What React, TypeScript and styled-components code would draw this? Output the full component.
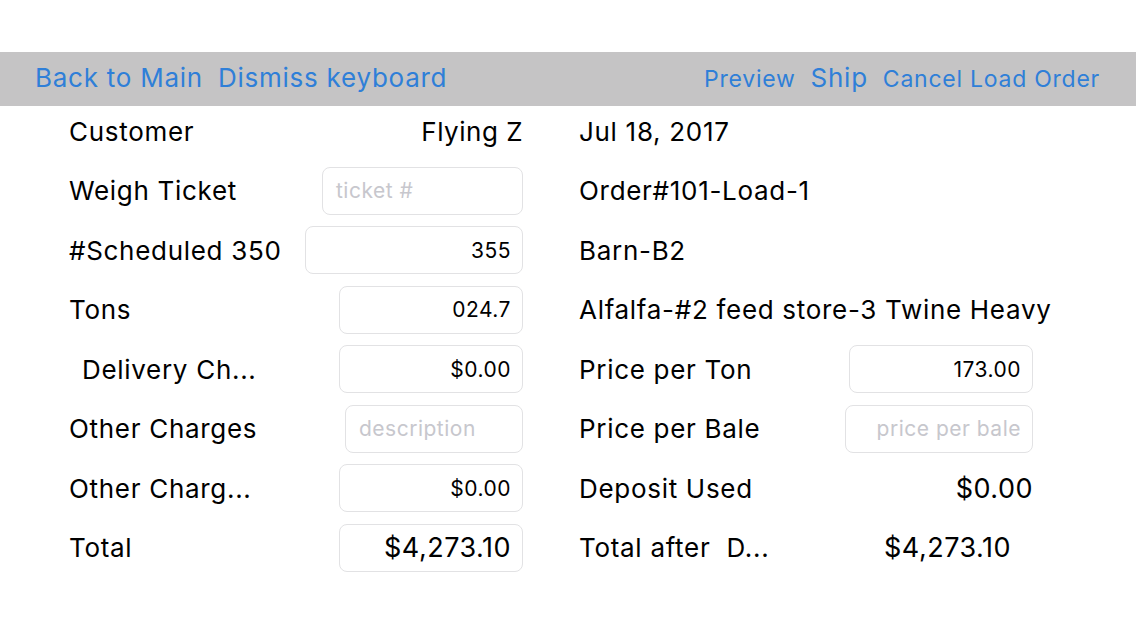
import React from "react";
import styled, { createGlobalStyle } from "styled-components";

const GlobalStyle = createGlobalStyle`
  html, body {
    margin: 0;
    padding: 0;
    background: #ffffff;
  }
  body {
    font-family: "Inter", "Liberation Sans", sans-serif;
    color: #000000;
  }
`;

const Screen = styled.div`
  width: 1136px;
  height: 639px;
  padding-top: 52px;
  box-sizing: border-box;
  background: #ffffff;
  overflow: hidden;
`;

const Toolbar = styled.div`
  height: 54px;
  background: #c5c4c5;
  display: flex;
  align-items: center;
  justify-content: space-between;
  padding: 0 36px 3px 35px;
  box-sizing: border-box;
`;

const ButtonGroup = styled.div`
  display: flex;
  align-items: baseline;
  gap: 15px;
`;

const BarButton = styled.span<{ $size: number }>`
  font-size: ${(p) => p.$size}px;
  letter-spacing: 0.75px;
  color: #2f7fd8;
  white-space: nowrap;
  cursor: pointer;
`;

const Form = styled.div`
  display: grid;
  grid-template-columns: 454px 454px;
  column-gap: 56px;
  padding: 1px 0 0 69px;
`;

const Column = styled.div`
  display: flex;
  flex-direction: column;
  gap: 11.5px;
`;

const Row = styled.div`
  height: 48px;
  display: flex;
  align-items: center;
  justify-content: space-between;
`;

const Label = styled.span<{ $indent?: number }>`
  font-size: 26px;
  letter-spacing: 0.7px;
  padding-left: ${(p) => p.$indent ?? 0}px;
  white-space: nowrap;
`;

const Value = styled.span<{ $size?: number; $inset?: number }>`
  font-size: ${(p) => p.$size ?? 26}px;
  letter-spacing: 0.5px;
  margin-right: ${(p) => p.$inset ?? 0}px;
  white-space: nowrap;
`;

const Field = styled.div<{ $width: number; $size?: number; $placeholder?: boolean; $align?: string }>`
  width: ${(p) => p.$width}px;
  height: 48px;
  box-sizing: border-box;
  border: 1px solid #e2e2e4;
  border-radius: 8px;
  display: flex;
  align-items: center;
  justify-content: ${(p) => p.$align ?? "flex-end"};
  padding: 0 11px 0 13px;
  font-size: ${(p) => p.$size ?? 21}px;
  letter-spacing: 0.5px;
  color: ${(p) => (p.$placeholder ? "#c7c7cd" : "#000000")};
  white-space: nowrap;
`;

const App: React.FC = () => {
  return (
    <Screen>
      <GlobalStyle />
      <Toolbar>
        <ButtonGroup>
          <BarButton $size={26}>Back to Main</BarButton>
          <BarButton $size={26}>Dismiss keyboard</BarButton>
        </ButtonGroup>
        <ButtonGroup>
          <BarButton $size={23}>Preview</BarButton>
          <BarButton $size={26}>Ship</BarButton>
          <BarButton $size={23}>Cancel Load Order</BarButton>
        </ButtonGroup>
      </Toolbar>
      <Form>
        <Column>
          <Row>
            <Label>Customer</Label>
            <Value>Flying Z</Value>
          </Row>
          <Row>
            <Label>Weigh Ticket</Label>
            <Field $width={201} $placeholder $align="flex-start">ticket #</Field>
          </Row>
          <Row>
            <Label>#Scheduled 350</Label>
            <Field $width={218}>355</Field>
          </Row>
          <Row>
            <Label>Tons</Label>
            <Field $width={184}>024.7</Field>
          </Row>
          <Row>
            <Label $indent={13}>Delivery Ch...</Label>
            <Field $width={184}>$0.00</Field>
          </Row>
          <Row>
            <Label>Other Charges</Label>
            <Field $width={178} $placeholder $align="flex-start">description</Field>
          </Row>
          <Row>
            <Label>Other Charg...</Label>
            <Field $width={184}>$0.00</Field>
          </Row>
          <Row>
            <Label>Total</Label>
            <Field $width={184} $size={27}>$4,273.10</Field>
          </Row>
        </Column>
        <Column>
          <Row>
            <Label>Jul 18, 2017</Label>
          </Row>
          <Row>
            <Label>Order#101-Load-1</Label>
          </Row>
          <Row>
            <Label>Barn-B2</Label>
          </Row>
          <Row>
            <Label>Alfalfa-#2 feed store-3 Twine Heavy</Label>
          </Row>
          <Row>
            <Label>Price per Ton</Label>
            <Field $width={184}>173.00</Field>
          </Row>
          <Row>
            <Label>Price per Bale</Label>
            <Field $width={188} $placeholder>price per bale</Field>
          </Row>
          <Row>
            <Label>Deposit Used</Label>
            <Value $size={27}>$0.00</Value>
          </Row>
          <Row>
            <Label>Total after&nbsp; D...</Label>
            <Value $size={27} $inset={22}>$4,273.10</Value>
          </Row>
        </Column>
      </Form>
    </Screen>
  );
};

export default App;
